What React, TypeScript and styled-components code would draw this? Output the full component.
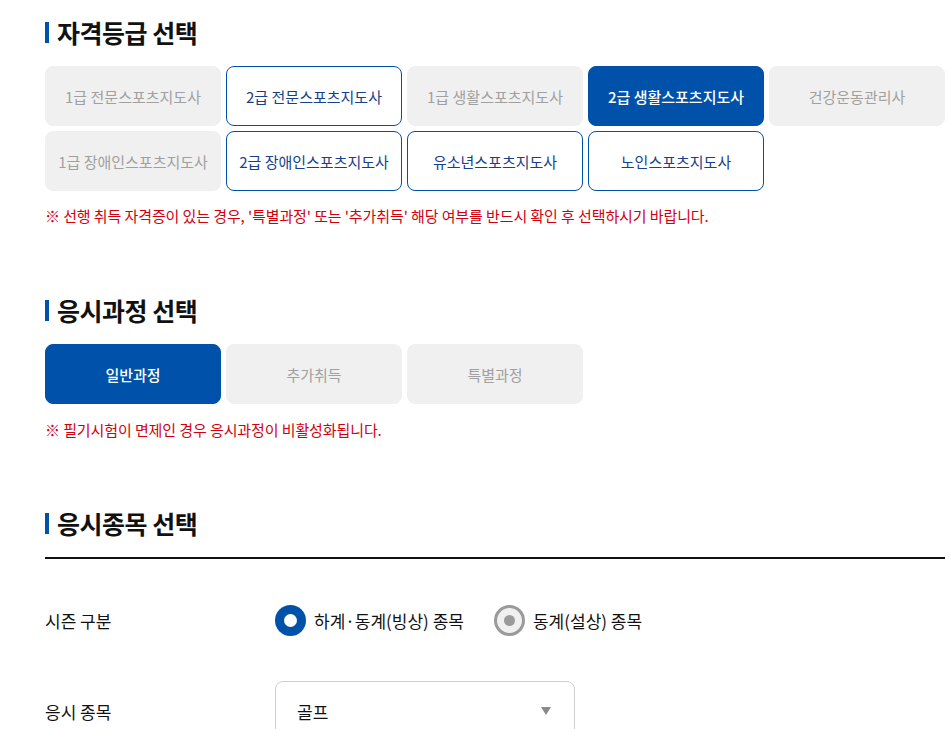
import React, { useState } from "react";
import styled, { createGlobalStyle, css } from "styled-components";

const GlobalStyle = createGlobalStyle`
  * { box-sizing: border-box; }
  body {
    margin: 0;
    background: #fff;
    font-family: "Noto Sans CJK KR", "Noto Sans", sans-serif;
    color: #111;
  }
`;

const Page = styled.div`
  width: 900px;
  margin-left: 45px;
  padding-top: 15px;
`;

const Section = styled.section<{ $gapTop?: number }>`
  margin-top: ${(p) => p.$gapTop ?? 0}px;
`;

const Title = styled.h2`
  margin: 0;
  display: flex;
  align-items: center;
  gap: 8px;
  font-size: 25px;
  line-height: 34px;
  font-weight: 700;
  letter-spacing: -0.5px;
  color: #111;
  &::before {
    content: "";
    display: block;
    width: 4px;
    height: 21px;
    background: #0051a9;
  }
`;

const ButtonGrid = styled.div`
  margin-top: 17px;
  display: grid;
  grid-template-columns: repeat(5, 176px);
  grid-auto-rows: 60px;
  gap: 5px;
`;

type Variant = "active" | "enabled" | "disabled";

const OptionButton = styled.button<{ $variant: Variant }>`
  border-radius: 8px;
  font-family: inherit;
  font-size: 15px;
  cursor: pointer;
  padding: 0;
  ${(p) =>
    p.$variant === "active"
      ? css`
          background: #0051a9;
          border: 1px solid #0051a9;
          color: #fff;
          font-weight: 500;
        `
      : p.$variant === "enabled"
      ? css`
          background: #fff;
          border: 1px solid #0051a9;
          color: #163f8c;
        `
      : css`
          background: #f0f0f0;
          border: 1px solid #f0f0f0;
          color: #a0a0a0;
          cursor: default;
        `}
`;

const Notice = styled.p<{ $top: number }>`
  margin: ${(p) => p.$top}px 0 0;
  font-size: 15px;
  line-height: 20px;
  color: #d2000f;
  letter-spacing: -0.1px;
`;

const Divider = styled.div`
  margin-top: 17px;
  height: 2px;
  background: #111;
`;

const FormRows = styled.div`
  display: flex;
  flex-direction: column;
  gap: 31px;
  padding-top: 31px;
`;

const FormRow = styled.div`
  display: flex;
  align-items: center;
  min-height: 60px;
`;

const Label = styled.div`
  width: 230px;
  font-size: 17px;
  color: #111;
`;

const RadioGroup = styled.div`
  display: flex;
  align-items: center;
  gap: 30px;
`;

const RadioLabel = styled.label`
  display: flex;
  align-items: center;
  gap: 8px;
  font-size: 17px;
  color: #111;
  cursor: pointer;
`;

const RadioMark = styled.span<{ $checked: boolean }>`
  width: 31px;
  height: 31px;
  border-radius: 50%;
  display: inline-flex;
  align-items: center;
  justify-content: center;
  ${(p) =>
    p.$checked
      ? css`
          background: #0051a9;
          &::after {
            content: "";
            width: 13px;
            height: 13px;
            border-radius: 50%;
            background: #fff;
          }
        `
      : css`
          background: #f0f0f0;
          border: 3px solid #9a9a9a;
          &::after {
            content: "";
            width: 11px;
            height: 11px;
            border-radius: 50%;
            background: #9a9a9a;
          }
        `}
`;

const SelectBox = styled.div`
  width: 300px;
  height: 60px;
  border: 1px solid #cfcfcf;
  border-radius: 8px;
  display: flex;
  align-items: center;
  justify-content: space-between;
  padding: 0 23px 0 21px;
  font-size: 17px;
  color: #111;
`;

const Arrow = styled.span`
  width: 0;
  height: 0;
  border-left: 5px solid transparent;
  border-right: 5px solid transparent;
  border-top: 8px solid #8a8a8a;
`;

const grades: { label: string; variant: Variant }[] = [
  { label: "1급 전문스포츠지도사", variant: "disabled" },
  { label: "2급 전문스포츠지도사", variant: "enabled" },
  { label: "1급 생활스포츠지도사", variant: "disabled" },
  { label: "2급 생활스포츠지도사", variant: "active" },
  { label: "건강운동관리사", variant: "disabled" },
  { label: "1급 장애인스포츠지도사", variant: "disabled" },
  { label: "2급 장애인스포츠지도사", variant: "enabled" },
  { label: "유소년스포츠지도사", variant: "enabled" },
  { label: "노인스포츠지도사", variant: "enabled" },
];

const courses: { label: string; variant: Variant }[] = [
  { label: "일반과정", variant: "active" },
  { label: "추가취득", variant: "disabled" },
  { label: "특별과정", variant: "disabled" },
];

export default function App() {
  const [season, setSeason] = useState(0);
  return (
    <>
      <GlobalStyle />
      <Page>
        <Section>
          <Title>자격등급 선택</Title>
          <ButtonGrid>
            {grades.map((g) => (
              <OptionButton key={g.label} $variant={g.variant}>
                {g.label}
              </OptionButton>
            ))}
          </ButtonGrid>
          <Notice $top={15}>
            ※ 선행 취득 자격증이 있는 경우, '특별과정' 또는 '추가취득' 해당 여부를 반드시 확인 후 선택하시기 바랍니다.
          </Notice>
        </Section>

        <Section $gapTop={67}>
          <Title>응시과정 선택</Title>
          <ButtonGrid>
            {courses.map((c) => (
              <OptionButton key={c.label} $variant={c.variant}>
                {c.label}
              </OptionButton>
            ))}
          </ButtonGrid>
          <Notice $top={16}>※ 필기시험이 면제인 경우 응시과정이 비활성화됩니다.</Notice>
        </Section>

        <Section $gapTop={66}>
          <Title>응시종목 선택</Title>
          <Divider />
          <FormRows>
            <FormRow>
              <Label>시즌 구분</Label>
              <RadioGroup>
                <RadioLabel onClick={() => setSeason(0)}>
                  <RadioMark $checked={season === 0} />
                  하계·동계(빙상) 종목
                </RadioLabel>
                <RadioLabel onClick={() => setSeason(1)}>
                  <RadioMark $checked={false} />
                  동계(설상) 종목
                </RadioLabel>
              </RadioGroup>
            </FormRow>
            <FormRow>
              <Label>응시 종목</Label>
              <SelectBox>
                골프
                <Arrow />
              </SelectBox>
            </FormRow>
          </FormRows>
        </Section>
      </Page>
    </>
  );
}
